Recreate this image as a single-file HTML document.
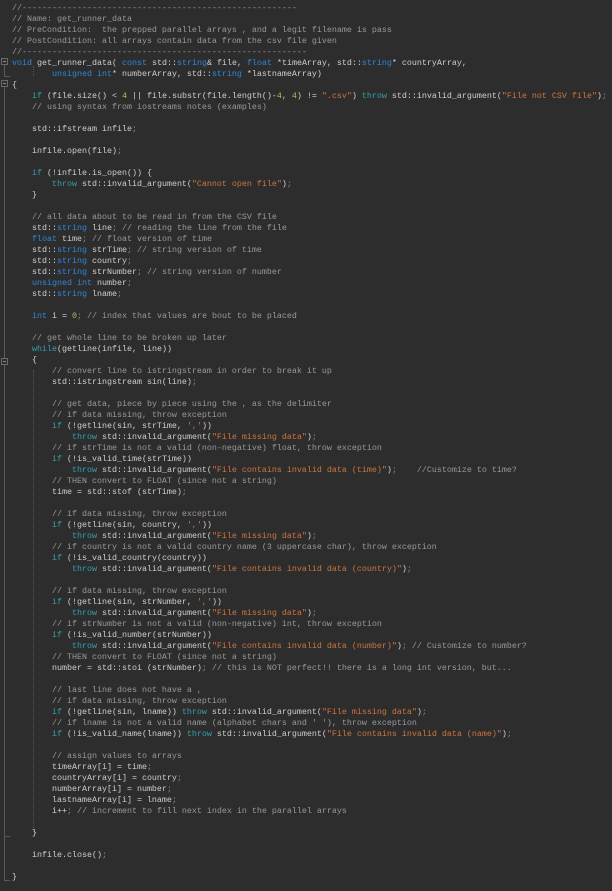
<!DOCTYPE html>
<html><head><meta charset="utf-8"><style>
html,body{margin:0;padding:0;background:#2d2d2d;width:612px;height:891px;overflow:hidden}
pre{position:absolute;left:12px;top:3px;margin:0;font-family:"Liberation Mono",monospace;font-size:8.33px;line-height:11px;color:#cfcfcf;white-space:pre}
.c{color:#999}.k{color:#2f87dc}.t{color:#35a0aa}.s{color:#cf7440}.n{color:#c8b45a}.p{color:#8a8a8a}
.g{position:absolute;background:#5a5a5a}
.box{position:absolute;left:1px;width:7px;height:7px;border:1px solid #6a6a6a;box-sizing:border-box;background:#2d2d2d;z-index:2}
.box:after{content:"";position:absolute;left:1px;top:2px;width:3px;height:1px;background:#8a8a8a}
.dot{position:absolute;width:0;border-left:1px dotted #555}
</style></head><body>
<div class="box" style="top:58px"></div>
<div class="g" style="left:4px;top:65px;width:1px;height:12px"></div>
<div class="g" style="left:4px;top:76px;width:6px;height:1px"></div>
<div class="box" style="top:80px"></div>
<div class="g" style="left:4px;top:87px;width:1px;height:793px"></div>
<div class="g" style="left:4px;top:880px;width:6px;height:1px"></div>
<div class="box" style="top:358px"></div>
<div class="g" style="left:4px;top:836px;width:6px;height:1px"></div>
<div class="dot" style="left:33px;top:66px;height:10px"></div>
<div class="dot" style="left:33px;top:370px;height:462px"></div>
<pre><span class="c">//-------------------------------------------------------</span>
<span class="c">// Name: get_runner_data</span>
<span class="c">// PreCondition:  the prepped parallel arrays , and a legit filename is pass</span>
<span class="c">// PostCondition: all arrays contain data from the csv file given</span>
<span class="c">//---------------------------------------------------------</span>
<span class="k">void</span> get_runner_data( <span class="k">const</span> std::<span class="k">string</span>&amp; file, <span class="k">float</span> *timeArray, std::<span class="k">string</span>* countryArray,
        <span class="k">unsigned int</span>* numberArray, std::<span class="k">string</span> *lastnameArray)
{
    <span class="t">if</span> (file.size() &lt; <span class="n">4</span> || file.substr(file.length()-<span class="n">4</span>, <span class="n">4</span>) != <span class="s">".csv"</span>) <span class="t">throw</span> std::invalid_argument(<span class="s">"File not CSV file"</span>)<span class="p">;</span>
    <span class="c">// using syntax from iostreams notes (examples)</span>

    std::ifstream infile<span class="p">;</span>

    infile.open(file)<span class="p">;</span>

    <span class="t">if</span> (!infile.is_open()) {
        <span class="t">throw</span> std::invalid_argument(<span class="s">"Cannot open file"</span>)<span class="p">;</span>
    }

    <span class="c">// all data about to be read in from the CSV file</span>
    std::<span class="k">string</span> line<span class="p">;</span> <span class="c">// reading the line from the file</span>
    <span class="k">float</span> time<span class="p">;</span> <span class="c">// float version of time</span>
    std::<span class="k">string</span> strTime<span class="p">;</span> <span class="c">// string version of time</span>
    std::<span class="k">string</span> country<span class="p">;</span>
    std::<span class="k">string</span> strNumber<span class="p">;</span> <span class="c">// string version of number</span>
    <span class="k">unsigned int</span> number<span class="p">;</span>
    std::<span class="k">string</span> lname<span class="p">;</span>

    <span class="k">int</span> i = <span class="n">0</span><span class="p">;</span> <span class="c">// index that values are bout to be placed</span>

    <span class="c">// get whole line to be broken up later</span>
    <span class="t">while</span>(getline(infile, line))
    {
        <span class="c">// convert line to istringstream in order to break it up</span>
        std::istringstream sin(line)<span class="p">;</span>

        <span class="c">// get data, piece by piece using the , as the delimiter</span>
        <span class="c">// if data missing, throw exception</span>
        <span class="t">if</span> (!getline(sin, strTime, <span class="s">','</span>))
            <span class="t">throw</span> std::invalid_argument(<span class="s">"File missing data"</span>)<span class="p">;</span>
        <span class="c">// if strTime is not a valid (non-negative) float, throw exception</span>
        <span class="t">if</span> (!is_valid_time(strTime))
            <span class="t">throw</span> std::invalid_argument(<span class="s">"File contains invalid data (time)"</span>)<span class="p">;</span>    <span class="c">//Customize to time?</span>
        <span class="c">// THEN convert to FLOAT (since not a string)</span>
        time = std::stof (strTime)<span class="p">;</span>

        <span class="c">// if data missing, throw exception</span>
        <span class="t">if</span> (!getline(sin, country, <span class="s">','</span>))
            <span class="t">throw</span> std::invalid_argument(<span class="s">"File missing data"</span>)<span class="p">;</span>
        <span class="c">// if country is not a valid country name (3 uppercase char), throw exception</span>
        <span class="t">if</span> (!is_valid_country(country))
            <span class="t">throw</span> std::invalid_argument(<span class="s">"File contains invalid data (country)"</span>)<span class="p">;</span>

        <span class="c">// if data missing, throw exception</span>
        <span class="t">if</span> (!getline(sin, strNumber, <span class="s">','</span>))
            <span class="t">throw</span> std::invalid_argument(<span class="s">"File missing data"</span>)<span class="p">;</span>
        <span class="c">// if strNumber is not a valid (non-negative) int, throw exception</span>
        <span class="t">if</span> (!is_valid_number(strNumber))
            <span class="t">throw</span> std::invalid_argument(<span class="s">"File contains invalid data (number)"</span>)<span class="p">;</span> <span class="c">// Customize to number?</span>
        <span class="c">// THEN convert to FLOAT (since not a string)</span>
        number = std::stoi (strNumber)<span class="p">;</span> <span class="c">// this is NOT perfect!! there is a long int version, but...</span>

        <span class="c">// last line does not have a ,</span>
        <span class="c">// if data missing, throw exception</span>
        <span class="t">if</span> (!getline(sin, lname)) <span class="t">throw</span> std::invalid_argument(<span class="s">"File missing data"</span>)<span class="p">;</span>
        <span class="c">// if lname is not a valid name (alphabet chars and ' '), throw exception</span>
        <span class="t">if</span> (!is_valid_name(lname)) <span class="t">throw</span> std::invalid_argument(<span class="s">"File contains invalid data (name)"</span>)<span class="p">;</span>

        <span class="c">// assign values to arrays</span>
        timeArray[i] = time<span class="p">;</span>
        countryArray[i] = country<span class="p">;</span>
        numberArray[i] = number<span class="p">;</span>
        lastnameArray[i] = lname<span class="p">;</span>
        i++<span class="p">;</span> <span class="c">// increment to fill next index in the parallel arrays</span>

    }

    infile.close()<span class="p">;</span>

}</pre>
</body></html>
